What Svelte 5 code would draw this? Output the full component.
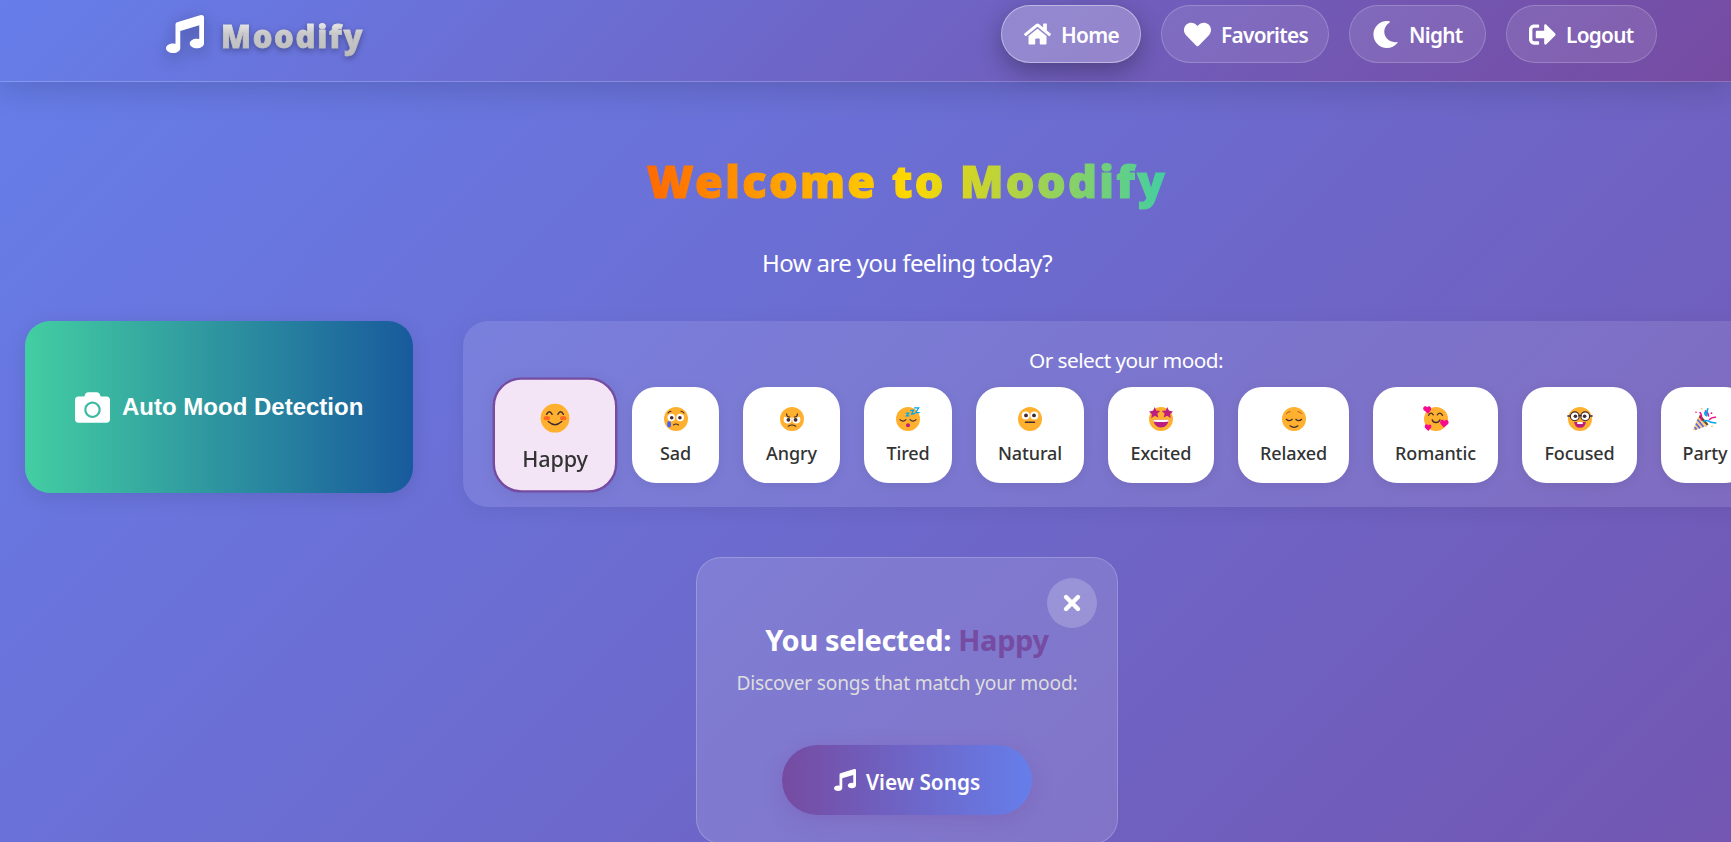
<script>
  const icons = {
    music: ['0 0 512 512', 'M470.38 1.51L150.41 96A32 32 0 0 0 128 126.51v261.41A139 139 0 0 0 96 384c-53 0-96 28.66-96 64s43 64 96 64 96-28.66 96-64V214.32l256-75v184.61a138.4 138.4 0 0 0-32-3.93c-53 0-96 28.66-96 64s43 64 96 64 96-28.65 96-64V32a32 32 0 0 0-41.62-30.49z'],
    home: ['0 0 576 512', 'M280.37 148.26L96 300.11V464a16 16 0 0 0 16 16l112.06-.29a16 16 0 0 0 15.92-16V368a16 16 0 0 1 16-16h64a16 16 0 0 1 16 16v95.64a16 16 0 0 0 16 16.05L464 480a16 16 0 0 0 16-16V300L295.67 148.26a12.19 12.19 0 0 0-15.3 0zM571.6 251.47L488 182.56V44.05a12 12 0 0 0-12-12h-56a12 12 0 0 0-12 12v72.61L318.47 43a48 48 0 0 0-61 0L4.34 251.47a12 12 0 0 0-1.6 16.9l25.5 31A12 12 0 0 0 45.15 301l235.22-193.74a12.19 12.19 0 0 1 15.3 0L530.9 301a12 12 0 0 0 16.9-1.6l25.5-31a12 12 0 0 0-1.7-16.93z'],
    heart: ['0 0 512 512', 'M462.3 62.6C407.5 15.9 326 24.3 275.7 76.2L256 96.5l-19.7-20.3C186.1 24.3 104.5 15.9 49.7 62.6c-62.8 53.6-66.1 149.8-9.9 207.9l193.5 199.8c12.5 12.9 32.8 12.9 45.3 0l193.5-199.8c56.3-58.1 53-154.3-9.8-207.9z'],
    moon: ['0 0 512 512', 'M283.211 512c78.962 0 151.079-35.925 198.857-94.792 7.068-8.708-.639-21.43-11.562-19.35-124.203 23.654-238.262-71.576-238.262-196.954 0-72.222 38.662-138.635 101.498-174.394 9.686-5.512 7.25-20.197-3.756-22.23A258.156 258.156 0 0 0 283.211 0c-141.309 0-256 114.511-256 256 0 141.309 114.511 256 256 256z'],
    logout: ['0 0 512 512', 'M497 273L329 441c-15 15-41 4.5-41-17v-96H152c-13.3 0-24-10.7-24-24v-96c0-13.3 10.7-24 24-24h136V88c0-21.4 25.9-32 41-17l168 168c9.3 9.4 9.3 24.6 0 34zM192 436v-40c0-6.6-5.4-12-12-12H96c-17.7 0-32-14.3-32-32V160c0-17.7 14.3-32 32-32h84c6.6 0 12-5.4 12-12V76c0-6.6-5.4-12-12-12H96c-53 0-96 43-96 96v192c0 53 43 96 96 96h84c6.6 0 12-5.4 12-12z'],
    camera: ['0 0 512 512', 'M512 144v288c0 26.5-21.5 48-48 48H48c-26.5 0-48-21.5-48-48V144c0-26.5 21.5-48 48-48h88l12.3-32.9c7-18.7 24.9-31.1 44.9-31.1h125.5c20 0 37.9 12.4 44.9 31.1L376 96h88c26.5 0 48 21.5 48 48zM376 288c0-66.2-53.8-120-120-120s-120 53.8-120 120 53.8 120 120 120 120-53.8 120-120zm-32 0c0 48.5-39.5 88-88 88s-88-39.5-88-88 39.5-88 88-88 88 39.5 88 88z']
  };

  const nav = [
    { label: 'Home', icon: 'home', width: 140 },
    { label: 'Favorites', icon: 'heart', width: 168 },
    { label: 'Night', icon: 'moon', width: 137 },
    { label: 'Logout', icon: 'logout', width: 151 }
  ];

  const moods = [
    { name: 'Happy', width: 104 },
    { name: 'Sad', width: 87 },
    { name: 'Angry', width: 97 },
    { name: 'Tired', width: 88 },
    { name: 'Natural', width: 108 },
    { name: 'Excited', width: 106 },
    { name: 'Relaxed', width: 111 },
    { name: 'Romantic', width: 125 },
    { name: 'Focused', width: 115 },
    { name: 'Party', width: 88 }
  ];

  let page = $state('Home');
  let selected = $state('Happy');
</script>

{#snippet icon(name, cls)}
  <svg class={cls} viewBox={icons[name][0]} fill="currentColor" aria-hidden="true"><path d={icons[name][1]} /></svg>
{/snippet}

{#snippet face(mood)}
  <svg class="emoji" viewBox="0 0 24 24" fill="none" stroke-linecap="round" stroke-linejoin="round" aria-hidden="true">
    {#if mood !== 'Party'}<circle cx="12" cy="12" r="12" fill="#ffb02e" />{/if}
    {#if mood === 'Happy'}
      <ellipse cx="5.2" cy="12" rx="2.6" ry="1.8" fill="#ff6723" />
      <ellipse cx="18.8" cy="12" rx="2.6" ry="1.8" fill="#ff6723" />
      <path d="M5 8.8Q7.3 4.6 9.6 8.8M14.4 8.8Q16.7 4.6 19 8.8M6.4 14.8Q12 20 17.6 14.8" stroke="#402a32" stroke-width="1.2" />
    {:else if mood === 'Sad'}
      <circle cx="7.3" cy="10.5" r="3.8" fill="#fff" /><circle cx="16.2" cy="10.5" r="3.8" fill="#fff" />
      <circle cx="7.7" cy="10.8" r="1.8" fill="#402a32" /><circle cx="15.9" cy="10.8" r="1.8" fill="#402a32" />
      <path d="M4 6Q5.2 4.4 7 4.2M17 4.2Q19 4.4 20 6M9.5 18Q12 16 14.5 18" stroke="#402a32" stroke-width="1.1" />
      <rect x="3.3" y="14.3" width="3.6" height="6" rx="1.6" fill="#3f5fff" />
    {:else if mood === 'Angry'}
      <circle cx="7.7" cy="12.5" r="4" fill="#fff" /><circle cx="16.3" cy="12.5" r="4" fill="#fff" />
      <path d="M3 9L9.8 11.8L11 9.8V6.5H3ZM21 9L14.2 11.8L13 9.8V6.5H21Z" fill="#ffb02e" />
      <circle cx="8.4" cy="12.8" r="1.9" fill="#402a32" /><circle cx="15.6" cy="12.8" r="1.9" fill="#402a32" />
      <path d="M6.5 7L7.1 8.8Q8 10 9.7 10M17.5 7L16.9 8.8Q16 10 14.3 10M8.3 19.2Q12 16.8 15.7 19.2" stroke="#402a32" stroke-width="1.2" />
    {:else if mood === 'Tired'}
      <path d="M4 12.6Q7 15.8 10 12.6M14 12.6Q17 15.8 20 12.6" stroke="#402a32" stroke-width="1.2" />
      <circle cx="12" cy="18.3" r="2" fill="#bb1d80" />
      <path d="M10.2 6.2h2.5l-2.3 2.7h2.6M14.6 3.6l3-.5-2 4 2.8-.5M18.5 .8h4.2l-3 4.7h3.5" stroke="#00a6ed" stroke-width="1.25" stroke-linejoin="miter" />
    {:else if mood === 'Natural'}
      <circle cx="7.7" cy="8.5" r="4" fill="#fff" /><circle cx="16.3" cy="8.5" r="4" fill="#fff" />
      <circle cx="8" cy="8.4" r="1.9" fill="#402a32" /><circle cx="16" cy="8.4" r="1.9" fill="#402a32" />
      <path d="M7.5 15.3h9" stroke="#402a32" stroke-width="1.5" />
    {:else if mood === 'Excited'}
      <path d="M4.5 12.8h15Q19 20.3 12 20.5Q5 20.3 4.5 12.8Z" fill="#bb1d80" />
      <path d="M4.5 12.8h15v1.6q-7.5 1.2-15 0Z" fill="#fff" />
      <path d="M5.8 0L7.2 3.5L11.3 4L8.4 6.5L9.3 10.5L5.7 8.8L2.3 11.2L2.9 7.3L0 4.4L4.1 3.8ZM18.2 0L16.8 3.5L12.7 4L15.6 6.5L14.7 10.5L18.3 8.8L21.7 11.2L21.1 7.3L24 4.4L19.9 3.8Z" fill="#bb1d80" />
    {:else if mood === 'Relaxed'}
      <path d="M4.3 12.3Q7.2 15 10.2 12.3M13.8 12.3Q16.8 15 19.7 12.3M8 18.8Q12 21.8 16 18.8" stroke="#402a32" stroke-width="1.2" />
      <path d="M4.5 6.5Q6 4.7 8 4.6M16 4.6Q18 4.7 19.5 6.5" stroke="#834a2b" stroke-width=".8" />
    {:else if mood === 'Romantic'}
      <path d="M4.6 8.3Q6.7 4.3 9.3 7.8M13.3 7.8Q16 4.3 18.5 8.3M8.2 12.8Q9 15.6 12 15.5Q15 15.6 16 12.8" stroke="#402a32" stroke-width="1.3" />
      <path d="M4.2 6.8L-.4 3.1C-2-.5 1.8-2 3.3 .2C5-1.8 8-.1 6.9 3ZM4.3 24L.9 20.7C0 17.5 2.8 16.3 4.3 18.2C6 16.3 8.4 18.4 7 20.8ZM19.7 20.5L16.2 16.2C15.4 12.9 19 11.4 20.3 14C22.5 11.8 26 14 24.1 17Z" fill="#f70a8d" />
    {:else if mood === 'Focused'}
      <circle cx="6.8" cy="9.3" r="4.4" fill="#fff" stroke="#402a32" stroke-width="1.1" />
      <circle cx="17.2" cy="9.3" r="4.4" fill="#fff" stroke="#402a32" stroke-width="1.1" />
      <path d="M-.2 9H2M22 9h2.2M10.8 8.8q1.2-1 2.4 0" stroke="#402a32" stroke-width="1.3" />
      <circle cx="7.4" cy="9.3" r="1.8" fill="#402a32" /><circle cx="16.6" cy="9.3" r="1.8" fill="#402a32" />
      <path d="M6.2 15h11.6Q17.4 20.7 12 20.8Q6.6 20.7 6.2 15Z" fill="#bb1d80" />
      <path d="M9.3 15h5.4v2H9.3Z" fill="#fff" />
    {:else}
      <path d="M7 7.5L15.5 17.3L13 19.8L5 12Z" fill="#6d4534" />
      <path d="M5.3 9.8L14.2 18.8L1 23.5Q0 23.6 .3 22.3Z" fill="#ffce7c" />
      <path d="M4.4 12.5L10.6 20M2.9 16.5L7 21.4M1.6 20.2L3.6 22.6" stroke="#5b68e8" stroke-width="1.7" stroke-linecap="butt" />
      <path d="M7 5.5Q9.2 8 8.4 13M12.4 3.8Q15.3 5.4 15.5 9M16.5 12.5Q18.5 10 22.5 10.2" stroke="#f70a8d" stroke-width="1.5" />
      <path d="M12.7 8.2Q10.8 6.2 12.3 5Q14.2 5 13.6 8.8M14.8 1.8L13.4 6.8M10.7 14.5Q13.5 12.3 18 15.3L22.8 16" stroke="#00a6ed" stroke-width="1.5" />
      <circle cx="8.8" cy="1.8" r=".8" fill="#ffb02e" /><circle cx="18.5" cy="6.2" r=".9" fill="#f70a8d" />
      <circle cx="3" cy="5.3" r=".8" fill="#f70a8d" /><circle cx="19" cy="19.2" r=".8" fill="#ffb02e" />
    {/if}
  </svg>
{/snippet}

<div class="page">
  <header>
    <div class="brand">
      {@render icon('music', 'brand-icon')}
      <span class="brand-name">Moodify</span>
    </div>
    <nav>
      {#each nav as item}
        <button class={['nav-item', item.label.toLowerCase(), page === item.label && 'active']} style="width: {item.width}px" onclick={() => (page = item.label)}>
          {@render icon(item.icon, 'nav-icon')}
          <span>{item.label}</span>
        </button>
      {/each}
    </nav>
  </header>

  <main>
    <h1>Welcome to Moodify</h1>
    <p class="question">How are you feeling today?</p>

    <section class="pickers">
      <button class="detect">
        {@render icon('camera', 'camera')}
        <span>Auto Mood Detection</span>
      </button>
      <div class="panel">
        <p>Or select your mood:</p>
        <div class="moods">
          {#each moods as mood}
            <button class={['mood', selected === mood.name && 'selected']} style="width: {mood.width}px" onclick={() => (selected = mood.name)}>
              {@render face(mood.name)}
              <span>{mood.name}</span>
            </button>
          {/each}
        </div>
      </div>
    </section>

    <section class="card">
      <button class="close" aria-label="Close">
        <svg viewBox="0 0 18 18" fill="none" stroke="currentColor" stroke-width="4.4" stroke-linecap="round" aria-hidden="true"><path d="M3 3l12 12M15 3L3 15" /></svg>
      </button>
      <h2>You selected: <span>{selected}</span></h2>
      <p>Discover songs that match your mood:</p>
      <button class="songs">
        {@render icon('music', 'songs-icon')}
        <span>View Songs</span>
      </button>
    </section>
  </main>
</div>

<style>
  :global(body) { overflow: hidden; }
  .page {
    box-sizing: border-box;
    height: 842px;
    overflow: hidden;
    color: #fff;
    font-family: "Noto Sans", "Open Sans", sans-serif;
    background: linear-gradient(135deg, #667eea 0%, #764ba2 100%) 0 0 / 1814px 1500px no-repeat;
  }
  button { box-sizing: border-box; border: 0; padding: 0; margin: 0; font: inherit; color: inherit; cursor: pointer; }
  h1, h2, p { margin: 0; white-space: nowrap; }
  svg { display: block; flex: none; overflow: visible; }

  header {
    box-sizing: border-box;
    position: relative;
    height: 82px;
    padding: 5px 74px 0 166px;
    display: flex;
    justify-content: space-between;
    align-items: flex-start;
    border-bottom: 1px solid rgba(255, 255, 255, .2);
    background: linear-gradient(135deg, #667eea 0%, #764ba2 100%);
    box-shadow: 0 8px 32px rgba(0, 0, 0, .15);
  }
  .brand { display: flex; align-items: center; gap: 17px; height: 58px; }
  .brand-icon { width: 38px; height: 38px; filter: drop-shadow(0 4px 8px rgba(0, 0, 0, .3)); }
  .brand-name {
    font-size: 31px;
    font-weight: 900;
    line-height: 42px;
    letter-spacing: 1.7px;
    margin-top: 3px;
    background: linear-gradient(180deg, #fff 0%, #c8c8c8 45%, #bcbcbc 100%);
    -webkit-background-clip: text;
    background-clip: text;
    color: transparent;
    -webkit-text-stroke: .8px transparent;
    filter: drop-shadow(0 2px 3px rgba(0, 0, 0, .35));
  }
  nav { display: flex; gap: 20px; }
  .nav-item {
    height: 58px;
    display: flex;
    align-items: center;
    gap: 10px;
    padding-left: 22px;
    border: 1px solid rgba(255, 255, 255, .2);
    border-radius: 29px;
    background: rgba(255, 255, 255, .1);
    font-size: 20.8px;
    font-weight: 600;
    line-height: 28px;
    white-space: nowrap;
  }
  .nav-item span { letter-spacing: -.7px; margin-top: 2px; }
  .nav-item.active {
    background: rgba(255, 255, 255, .25);
    border-color: rgba(255, 255, 255, .4);
    box-shadow: 0 8px 25px rgba(0, 0, 0, .3);
  }
  .nav-icon { width: 27px; height: 27px; }
  .home .nav-icon { height: 24px; }

  main { display: flex; flex-direction: column; align-items: center; width: 1814px; }
  h1 {
    margin-top: 65px;
    font-size: 45px;
    font-weight: 900;
    line-height: 68px;
    letter-spacing: 2.4px;
    background: linear-gradient(90deg, #ff6a00 0%, #ffd700 50%, #43cea2 100%);
    -webkit-background-clip: text;
    background-clip: text;
    color: transparent;
    -webkit-text-stroke: 1.2px transparent;
  }
  .question { margin-top: 31px; font-size: 24px; line-height: 34px; letter-spacing: -.6px; }

  .pickers { align-self: flex-start; display: flex; align-items: flex-start; gap: 50px; margin: 41px 0 0 25px; }
  .detect {
    width: 388px;
    height: 172px;
    display: flex;
    align-items: center;
    gap: 12px;
    padding-left: 50px;
    border-radius: 25px;
    background: linear-gradient(90deg, #43cea2 0%, #185a9d 100%);
    box-shadow: 0 4px 20px rgba(0, 0, 0, .1);
    font: bold 24px "Liberation Sans", Arial, sans-serif;
    white-space: nowrap;
  }
  .camera { width: 35px; height: 35px; }
  .panel {
    box-sizing: border-box;
    width: 1326px;
    height: 186px;
    padding: 24px 0 0 40px;
    border-radius: 25px;
    background: rgba(255, 255, 255, .1);
    box-shadow: 0 4px 20px rgba(0, 0, 0, .06);
  }
  .panel p { width: 1246px; text-align: center; font-size: 20.8px; line-height: 30px; letter-spacing: -.55px; }
  .moods { display: flex; gap: 24px; margin-top: 12px; }
  .mood {
    flex: none;
    height: 96px;
    display: flex;
    flex-direction: column;
    align-items: center;
    gap: 9px;
    padding-top: 20px;
    border-radius: 24px;
    background: #fff;
    color: #333;
    font-size: 18px;
    font-weight: 500;
    line-height: 26px;
    box-shadow: 0 2px 12px rgba(0, 0, 0, .07);
  }
  .mood:first-child { margin-right: 1px; }
  .mood span { letter-spacing: -.1px; }
  .mood.selected {
    transform: scale(1.2);
    background: #f3e5f5;
    border: 2px solid #764ba2;
  }
  .emoji { width: 24px; height: 24px; }

  .card {
    box-sizing: border-box;
    position: relative;
    width: 422px;
    height: 287px;
    margin-top: 50px;
    display: flex;
    flex-direction: column;
    align-items: center;
    border: 1px solid rgba(255, 255, 255, .2);
    border-radius: 25px;
    background: rgba(255, 255, 255, .13);
  }
  .close {
    position: absolute;
    top: 20px;
    right: 20px;
    width: 50px;
    height: 50px;
    display: grid;
    place-items: center;
    border-radius: 50%;
    background: rgba(255, 255, 255, .2);
  }
  .close svg { width: 18px; height: 18px; }
  h2 { margin-top: 62px; font-size: 29px; line-height: 40px; font-weight: 700; letter-spacing: -.35px; }
  h2 span { color: #764ba2; }
  .card p { margin-top: 9px; font-size: 19.2px; line-height: 28px; letter-spacing: -.2px; color: #ddd; }
  .songs {
    width: 250px;
    height: 70px;
    margin-top: 48px;
    display: flex;
    align-items: center;
    gap: 10px;
    padding-left: 52px;
    border-radius: 35px;
    background: linear-gradient(90deg, #764ba2 0%, #667eea 100%);
    box-shadow: 0 5px 20px rgba(118, 75, 162, .3);
    font-size: 20.8px;
    font-weight: 600;
    letter-spacing: 0;
    white-space: nowrap;
  }
  .songs span { margin-top: 3px; }
  .songs-icon { width: 22px; height: 22px; }
</style>
